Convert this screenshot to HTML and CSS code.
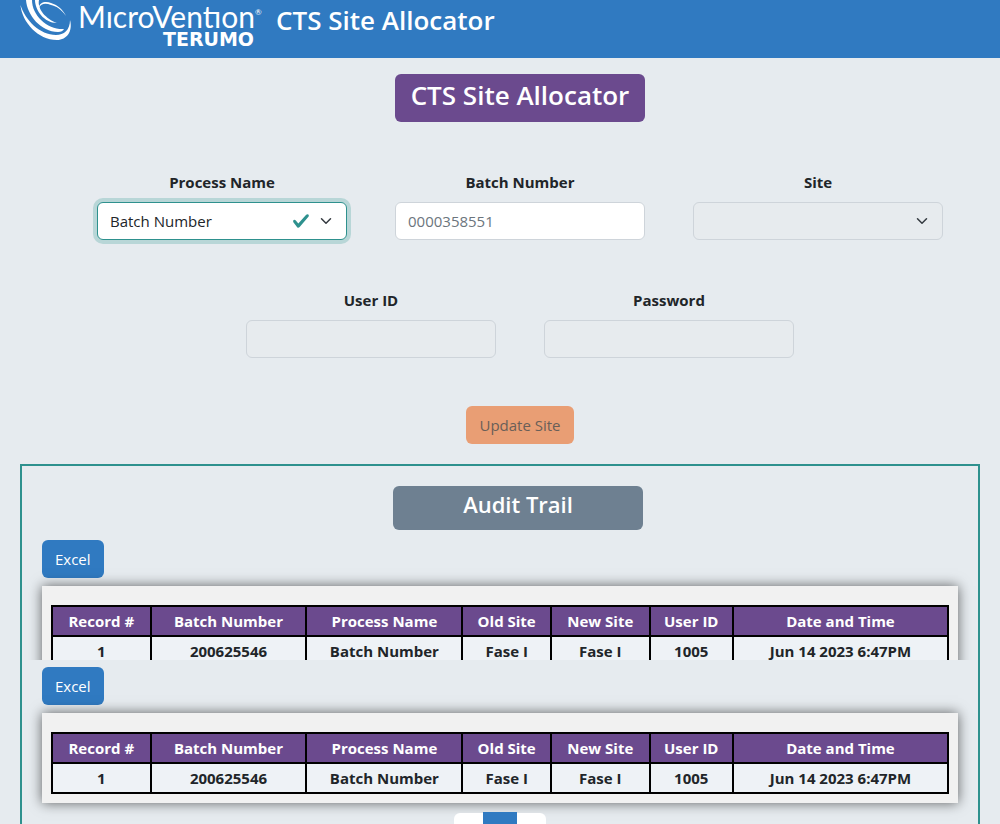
FILE: index.html
```html
<!DOCTYPE html>
<html lang="en">
<head>
<meta charset="utf-8">
<title>CTS Site Allocator</title>
<link rel="stylesheet" href="styles.css">
</head>
<body>
<header class="topbar">
  <svg class="swirl" viewBox="0 0 54 42" aria-hidden="true">
    <path d="M.5 5C2 22 18 40 37 40C47 40 53 31 50 20C50 30 44 35 36 35C20 35 5 20 .5 5Z"/>
    <path d="M6 0C7 15 21 32 38 32C41 32 43 31 44 29C28 30 12 16 12 0Z"/>
    <path d="M15 0C15 10 24 23 37 23C26 19 17 9 19 0Z"/>
    <path d="M19 8C19 2 26 1 31 3C38 5 43 10 46 16C41 9 36 6 31 5C26 3 21 3 19 8Z"/>
  </svg>
  <div class="brand">
    <span class="brand-name">MıcroVentıon<span class="reg">®</span></span>
    <span class="brand-sub">TERUMO</span>
  </div>
  <h2 class="app-name">CTS Site Allocator</h2>
</header>
<main>
  <form class="allocator">
    <h2 class="form-title">CTS Site Allocator</h2>
    <div class="fields">
      <div class="field">
        <label for="process">Process Name</label>
        <div class="select-wrap">
          <select id="process" class="control control-valid"><option>Batch Number</option></select>
          <svg class="check" viewBox="0 0 8 8" aria-hidden="true"><path d="M2.3 6.73.6 4.53c-.4-1.04.46-1.4 1.1-.8l1.1 1.4 3.4-3.8c.6-.63 1.6-.27 1.2.7l-4 4.6c-.43.5-.8.4-1.1.1z"/></svg>
          <svg class="caret" viewBox="0 0 16 16" aria-hidden="true"><path d="m2 5 6 6 6-6"/></svg>
        </div>
      </div>
      <div class="field">
        <label for="batch">Batch Number</label>
        <input id="batch" class="control" type="text" placeholder="0000358551">
      </div>
      <div class="field">
        <label for="site">Site</label>
        <div class="select-wrap">
          <select id="site" class="control" disabled></select>
          <svg class="caret" viewBox="0 0 16 16" aria-hidden="true"><path d="m2 5 6 6 6-6"/></svg>
        </div>
      </div>
    </div>
    <div class="fields">
      <div class="field">
        <label for="user">User ID</label>
        <input id="user" class="control" type="text" disabled>
      </div>
      <div class="field">
        <label for="password">Password</label>
        <input id="password" class="control" type="password" disabled>
      </div>
    </div>
    <button class="btn btn-update" type="button" disabled>Update Site</button>
  </form>
  <section class="audit">
    <div class="audit-head"><h3 class="audit-title">Audit Trail</h3></div>
    <div class="report report-cut">
      <button class="btn btn-excel" type="button">Excel</button>
      <div class="panel">
        <table>
          <colgroup><col class="c-rec"><col class="c-wide"><col class="c-wide"><col class="c-old"><col class="c-new"><col class="c-user"><col></colgroup>
          <thead><tr><th>Record #</th><th>Batch Number</th><th>Process Name</th><th>Old Site</th><th>New Site</th><th>User ID</th><th>Date and Time</th></tr></thead>
          <tbody><tr><td>1</td><td>200625546</td><td>Batch Number</td><td>Fase I</td><td>Fase I</td><td>1005</td><td>Jun 14 2023 6:47PM</td></tr></tbody>
        </table>
      </div>
    </div>
    <div class="report">
      <button class="btn btn-excel" type="button">Excel</button>
      <div class="panel">
        <table>
          <colgroup><col class="c-rec"><col class="c-wide"><col class="c-wide"><col class="c-old"><col class="c-new"><col class="c-user"><col></colgroup>
          <thead><tr><th>Record #</th><th>Batch Number</th><th>Process Name</th><th>Old Site</th><th>New Site</th><th>User ID</th><th>Date and Time</th></tr></thead>
          <tbody><tr><td>1</td><td>200625546</td><td>Batch Number</td><td>Fase I</td><td>Fase I</td><td>1005</td><td>Jun 14 2023 6:47PM</td></tr></tbody>
        </table>
      </div>
    </div>
    <nav class="pager" aria-label="Pages">
      <button class="page page-prev" type="button" aria-label="Previous"></button>
      <button class="page page-current" type="button" aria-label="Current page"></button>
      <button class="page page-next" type="button" aria-label="Next"></button>
    </nav>
  </section>
</main>
</body>
</html>
```

FILE: styles.css
```css
* { box-sizing: border-box; }
body {
  margin: 0;
  height: 100vh;
  overflow: hidden;
  background: #e6ebef;
  color: #212529;
  font: 400 15px/24px "Open Sans", "Noto Sans", sans-serif;
}
h2, h3 { margin: 0; font-weight: 600; color: #fff; }
button, input, select { font: inherit; color: inherit; }

.topbar {
  display: flex;
  align-items: flex-start;
  height: 58px;
  padding-left: 20px;
  background: #307ac1;
}
.swirl { width: 54px; height: 42px; fill: #fff; }
.brand {
  display: flex;
  flex-direction: column;
  width: 182px;
  margin-left: 4px;
  color: #fff;
}
.brand-name {
  display: flex;
  font: 400 30px/32px Lato, sans-serif;
  white-space: nowrap;
}
.reg { font-size: 8px; line-height: 24px; }
.brand-sub {
  align-self: flex-end;
  margin-right: 6px;
  font: 700 19px/14px "DejaVu Sans", sans-serif;
}
.app-name { margin-left: 16px; font-size: 26px; line-height: 40px; }

.allocator {
  display: flex;
  flex-direction: column;
  align-items: center;
  gap: 48px;
  padding: 16px 0 20px 40px;
}
.form-title {
  width: 250px;
  height: 48px;
  border-radius: 6px;
  background: #6b4a8e;
  font-size: 26px;
  line-height: 42px;
  text-align: center;
}
.fields { display: flex; gap: 48px; }
.field { display: flex; flex-direction: column; gap: 8px; width: 250px; }
.field label { font-weight: 700; text-align: center; }
.select-wrap {
  display: grid;
  grid-template-columns: 1fr 20px 12px 7px;
  column-gap: 8px;
  align-items: center;
}
.select-wrap .control { grid-area: 1 / 1 / 2 / -1; }
.control {
  width: 100%;
  height: 38px;
  padding: 0 12px;
  border: 1px solid #ced4da;
  border-radius: 6px;
  background: #fff;
  appearance: none;
  outline: none;
}
.control::placeholder { color: #6c757d; opacity: 1; }
.control:disabled { background: #e7ebee; opacity: 1; }
.control-valid { border-color: #2e918e; box-shadow: 0 0 0 4px #b8d6d7; }
.check { grid-area: 1 / 2; width: 18px; height: 18px; fill: #2e918e; pointer-events: none; }
.caret {
  grid-area: 1 / 3;
  width: 12px;
  height: 12px;
  fill: none;
  stroke: #343a40;
  stroke-width: 2;
  stroke-linecap: round;
  stroke-linejoin: round;
  pointer-events: none;
}

.btn { height: 38px; padding: 0 13px; border: 0; border-radius: 6px; }
.btn-update { background: #e99e74; color: #6a5f58; }
.btn-excel { display: block; background: #307ac1; color: #fff; }

.audit {
  min-height: 400px;
  margin: 0 20px;
  padding: 20px;
  border: 2px solid #2e918e;
}
.audit-head { display: flex; justify-content: center; padding: 0 0 10px 36px; }
.audit-title {
  width: 250px;
  height: 44px;
  border-radius: 6px;
  background: #6e8091;
  font-size: 22px;
  line-height: 36px;
  text-align: center;
}
.report-cut { height: 120px; margin-bottom: 7px; clip-path: inset(-20px -20px 0); }
.panel {
  margin-top: 8px;
  padding: 19px 9px 9px;
  background: #f1f1f1;
  box-shadow: 0 0 12px rgba(0, 0, 0, 0.6);
}
table {
  width: 100%;
  table-layout: fixed;
  border-collapse: collapse;
  background: #eef2f6;
  font-weight: 700;
  text-align: center;
}
.c-rec { width: 11%; }
.c-wide { width: 17.4%; }
.c-old { width: 9.9%; }
.c-new { width: 11%; }
.c-user { width: 9.3%; }
th, td { height: 30px; padding: 0; border: 2px solid #000; white-space: nowrap; }
th { background: #6b4a8e; color: #fff; }

.pager { display: flex; justify-content: center; margin-top: 9px; }
.page { width: 29px; height: 38px; margin-top: 1px; border: 0; background: #fff; }
.page-prev { border-radius: 6px 0 0 6px; }
.page-next { border-radius: 0 6px 6px 0; }
.page-current { width: 34px; margin-top: 0; background: #307ac1; }
```
